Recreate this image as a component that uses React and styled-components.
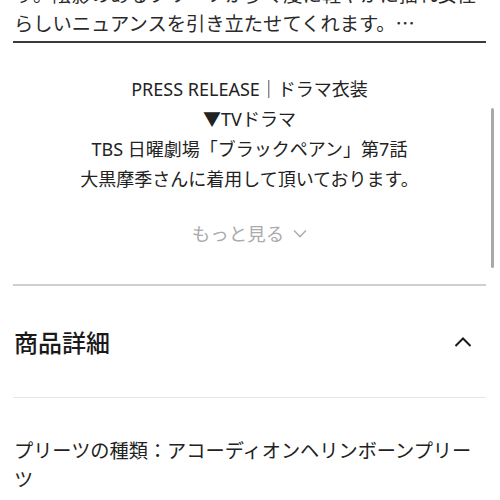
import React from "react";
import styled, { createGlobalStyle } from "styled-components";

const Global = createGlobalStyle`
  html, body {
    margin: 0;
    padding: 0;
    background: #fff;
    overflow: hidden;
  }
  body {
    font-family: "Noto Sans CJK JP", "Noto Sans", sans-serif;
    color: #222;
  }
`;

const Page = styled.div`
  position: relative;
  width: 500px;
  height: 500px;
  overflow: hidden;
`;

const Content = styled.div`
  padding: 0 14px 0 13px;
`;

const Description = styled.div`
  margin-top: -20px;
  padding: 0 0 3px 1px;
  font-size: 19.3px;
  line-height: 29px;
  color: #2a2a2a;
  border-bottom: 2px solid #3a3a3a;
  white-space: nowrap;
`;

const Press = styled.div`
  margin-top: 31px;
  text-align: center;
  font-family: "Noto Sans", "Noto Sans CJK JP", sans-serif;
  font-size: 18px;
  line-height: 30px;
  color: #222;
`;

const More = styled.div`
  margin-top: 24px;
  display: flex;
  justify-content: center;
  align-items: center;
  gap: 9px;
  font-size: 18.5px;
  line-height: 30px;
  color: #ababab;
`;

const Divider = styled.div`
  height: ${(p) => p.thick ? "2px" : "1px"};
  background: ${(p) => p.color};
  margin-top: ${(p) => p.top || 0}px;
`;

const Header = styled.div`
  height: 111px;
  display: flex;
  align-items: center;
  justify-content: space-between;
  padding: 0 14px 0 1px;
`;

const Title = styled.h2`
  margin: 0;
  font-size: 24px;
  font-weight: 500;
  color: #1a1a1a;
`;

const Detail = styled.div`
  padding: 38px 0 0 1px;
  font-size: 19.2px;
  line-height: 29px;
  color: #222;
`;

const Scrollbar = styled.div`
  position: absolute;
  right: 6px;
  top: 108px;
  width: 3px;
  height: 160px;
  border-radius: 2px;
  background: #a9a9a9;
`;

const ChevronDown = () => (
  <svg width="14" height="9" viewBox="0 0 14 9" fill="none">
    <path d="M1 1.5L7 7.5L13 1.5" stroke="#b0b0b0" strokeWidth="1.6" />
  </svg>
);

const ChevronUp = () => (
  <svg width="18" height="10" viewBox="0 0 18 10" fill="none">
    <path d="M1.5 9L9 1.5L16.5 9" stroke="#1a1a1a" strokeWidth="2" />
  </svg>
);

export default function App() {
  return (
    <Page>
      <Global />
      <Content>
        <Description>
          り。陰影のあるプリーツが歩く度に軽やかに揺れ女性
          <br />
          らしいニュアンスを引き立たせてくれます。…
        </Description>
        <Press>
          PRESS RELEASE｜ドラマ衣装
          <br />
          ▼TVドラマ
          <br />
          TBS 日曜劇場「ブラックペアン」第7話
          <br />
          大黒摩季さんに着用して頂いております。
        </Press>
        <More>
          もっと見る
          <ChevronDown />
        </More>
        <Divider thick color="#cfcfcf" top={36} />
        <Header>
          <Title>商品詳細</Title>
          <ChevronUp />
        </Header>
        <Divider color="#e6e6e6" />
        <Detail>
          プリーツの種類：アコーディオンヘリンボーンプリーツ
        </Detail>
      </Content>
      <Scrollbar />
    </Page>
  );
}
